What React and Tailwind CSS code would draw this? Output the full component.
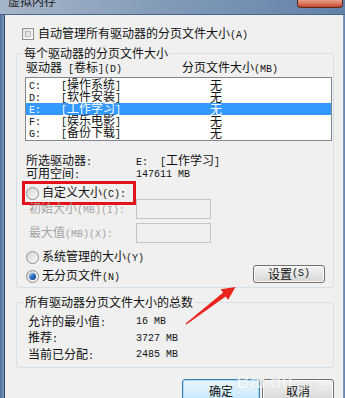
import React from 'react';

// ascii bits in the dialog are half-width, like SimSun's latin glyphs
function A({ children }) {
  return <span className="font-['Liberation_Mono',monospace] text-[10px]">{children}</span>;
}

function Check() {
  return (
    <span className="block w-[12px] h-[12px] shrink-0 border border-[#8e8f8f] bg-gradient-to-br from-[#e4e4e4] to-[#fdfdfd] p-[2px]">
      <span className="block w-full h-full border border-[#b7b9bc] bg-gradient-to-br from-[#d2d5da] to-[#f7f7f7]" />
    </span>
  );
}

function Radio({ on }) {
  return (
    <span className="flex w-[13px] h-[13px] shrink-0 items-center justify-center rounded-full border border-[#8e8f8f] bg-gradient-to-br from-[#d4d4d4] to-[#fbfbfb]">
      {on && <span className="block w-[7px] h-[7px] rounded-full bg-gradient-to-br from-[#9fd0f5] via-[#2f6fbf] to-[#163f80]" />}
    </span>
  );
}

function Btn({ children, className, primary }) {
  return (
    <div
      className={
        'flex items-center justify-center rounded-[3px] border ' +
        (primary
          ? 'border-[#3c7fb1] bg-gradient-to-b from-[#eaf6fd] via-[#d9f0fc] to-[#bee6fd] shadow-[inset_0_0_0_1px_#a7d8f5]'
          : 'border-[#707070] bg-gradient-to-b from-[#f3f3f3] via-[#e6e6e6] to-[#d4d4d4] shadow-[inset_0_0_0_1px_#fcfcfc]') +
        ' ' + className
      }
    >
      {children}
    </div>
  );
}

const drives = [
  { d: 'C:', name: '操作系统' },
  { d: 'D:', name: '软件安装' },
  { d: 'E:', name: '工作学习', sel: true },
  { d: 'F:', name: '娱乐电影' },
  { d: 'G:', name: '备份下载' },
];

export default function App() {
  return (
    <div className="relative w-[345px] h-[398px] overflow-hidden bg-[#f0f0f0] font-['Noto_Sans_CJK_SC',sans-serif] text-[12px] leading-[12px] text-[#111]">
      {/* title bar, cut off at the top */}
      <div className="relative h-[15px] overflow-hidden bg-gradient-to-r from-[#a6b6c9] via-[#8199b7] to-[#6282aa] border-b border-[#48668c]">
        <div className="pl-[8px] -mt-[6px] text-[12px] leading-[14px] text-[#1b1b1b]">虚拟内存</div>
        <div className="absolute top-0 right-[2px] w-[46px] h-[8px] rounded-b-[4px] border border-t-0 border-[#5a2a22] bg-gradient-to-b from-[#e9a08b] to-[#c9452c]" />
      </div>

      <div className="flex h-[383px]">
        <div className="w-[5px] bg-gradient-to-r from-[#4d6e99] to-[#7a98bd] border-r border-[#2f4a6d]" />

        <div className="flex-1 flex flex-col">
          <div className="mt-[13px] pl-[17px] flex items-center gap-[4px] h-[12px]">
            <Check />
            <span>自动管理所有驱动器的分页文件大小<A>(A)</A></span>
          </div>

          <fieldset className="mt-[7px] ml-[11px] w-[318px] border border-[#d5dfe5] rounded-[3px] pb-[4px]">
            <legend className="ml-[6px] px-[1px] leading-[12px]">每个驱动器的分页文件大小</legend>

            <div className="mt-[3px] pl-[9px] flex h-[12px] items-center">
              <span className="w-[156px]">驱动器<A>&nbsp;[</A>卷标<A>](D)</A></span>
              <span>分页文件大小<A>(MB)</A></span>
            </div>

            <div className="mt-[3px] ml-[8px] w-[307px] border border-[#828790] bg-white py-[1px]">
              {drives.map(r => (
                <div
                  key={r.d}
                  className={'flex h-[12px] items-center pl-[3px] ' + (r.sel ? 'bg-[#3399ff] text-white' : '')}
                >
                  <span className="w-[32px]"><A>{r.d}</A></span>
                  <span className="w-[149px]"><A>[</A>{r.name}<A>]</A></span>
                  <span>无</span>
                </div>
              ))}
            </div>

            <div className="mt-[14px] pl-[9px] flex h-[13px] items-center">
              <span className="w-[110px]">所选驱动器<A>:</A></span>
              <span><A>E:&nbsp;&nbsp;[</A>工作学习<A>]</A></span>
            </div>
            <div className="pl-[9px] flex h-[13px] items-center">
              <span className="w-[110px]">可用空间<A>:</A></span>
              <A>147611 MB</A>
            </div>

            <div className="ml-[5px] w-[114px] h-[24px] border-[3px] border-[#e3131b] flex items-center gap-[3px] pl-[1px]">
              <Radio />
              <span>自定义大小<A>(C):</A></span>
            </div>

            <div className="-mt-[6px] pl-[12px] flex h-[20px] items-center text-[#a3a3a3]">
              <span className="w-[107px]">初始大小<A>(MB)(I):</A></span>
              <div className="w-[75px] h-[20px] border border-[#c2c5c9] bg-[#f0f0f0]" />
            </div>
            <div className="mt-[4px] pl-[12px] flex h-[20px] items-center text-[#a3a3a3]">
              <span className="w-[107px]">最大值<A>(MB)(X):</A></span>
              <div className="w-[75px] h-[20px] border border-[#c2c5c9] bg-[#f0f0f0]" />
            </div>

            <div className="mt-[8px] pl-[9px] flex h-[13px] items-center gap-[3px]">
              <Radio />
              <span>系统管理的大小<A>(Y)</A></span>
            </div>
            <div className="mt-[1px] pl-[9px] pr-[8px] flex items-start justify-between h-[18px]">
              <div className="mt-[5px] flex h-[13px] items-center gap-[3px]">
                <Radio on />
                <span>无分页文件<A>(N)</A></span>
              </div>
              <Btn className="w-[72px] h-[18px]">设置<A>(S)</A></Btn>
            </div>
          </fieldset>

          <fieldset className="mt-[8px] ml-[11px] w-[318px] border border-[#d5dfe5] rounded-[3px] pb-[4px]">
            <legend className="ml-[7px] px-[1px] leading-[12px]">所有驱动器分页文件大小的总数</legend>
            <div className="mt-[6px] pl-[11px] flex h-[16px] items-center">
              <span className="w-[108px]">允许的最小值<A>:</A></span>
              <A>16 MB</A>
            </div>
            <div className="pl-[11px] flex h-[17px] items-center">
              <span className="w-[108px]">推荐<A>:</A></span>
              <A>3727 MB</A>
            </div>
            <div className="pl-[11px] flex h-[16px] items-center">
              <span className="w-[108px]">当前已分配<A>:</A></span>
              <A>2485 MB</A>
            </div>
          </fieldset>

          <div className="mt-[11px] pr-[9px] flex justify-end gap-[2px]">
            <Btn primary className="w-[78px] h-[23px]">确定</Btn>
            <Btn className="w-[72px] h-[23px]">取消</Btn>
          </div>
        </div>

        <div className="w-[2px] bg-gradient-to-r from-[#8aa5c6] to-[#5f7fa8]" />
      </div>

      {/* annotation arrow */}
      <svg className="absolute left-0 top-0 pointer-events-none" width="345" height="398" viewBox="0 0 345 398">
        <polygon
          points="185.6,323.4 223.2,292.6 220.6,289.2 235.5,287 228.2,299.8 225.6,296.4 186.4,324.6"
          fill="#e8241c"
        />
      </svg>

      {/* faint watermark */}
      <div className="absolute left-[236px] top-[372px] flex items-end gap-[4px] pointer-events-none opacity-60">
        <span className="font-['Liberation_Sans',sans-serif] font-bold text-[19px] leading-[20px] text-white [text-shadow:0_0_1px_#9a9a9a]">Bai</span>
        <span className="font-['Liberation_Sans',sans-serif] font-bold text-[19px] leading-[20px] text-white [text-shadow:0_0_1px_#9a9a9a]">du</span>
        <span className="text-[11px] leading-[14px] text-white [text-shadow:0_0_1px_#9a9a9a]">经验</span>
      </div>
    </div>
  );
}
